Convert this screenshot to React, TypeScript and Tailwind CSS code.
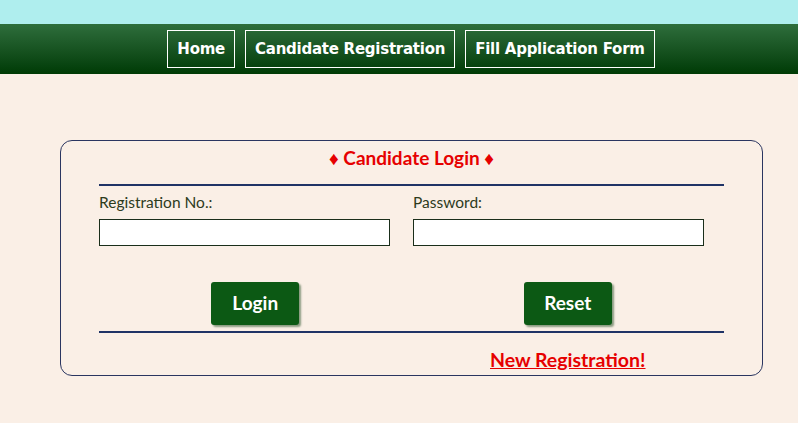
export default function App() {
  const navItems = ["Home", "Candidate Registration", "Fill Application Form"];

  return (
    <div className="min-h-[423px] bg-[#faefe6]">
      <div className="h-[24px] bg-[#afeeee]" />
      <nav className="flex h-[50px] items-center justify-center gap-[10px] bg-gradient-to-b from-[#2e6e3c] to-[#003b05] pl-[24px]">
        {navItems.map((item) => (
          <a
            key={item}
            href="#"
            className="flex h-[38px] items-center border border-white px-[9px] font-['DejaVu_Sans',sans-serif] text-[15px] font-bold tracking-[-0.25px] text-white"
          >
            {item}
          </a>
        ))}
      </nav>

      <div className="pl-[60px] pt-[66px]">
        <div className="w-[703px] rounded-[12px] border border-[#2a3560] px-[38px] pb-[3px] font-['Lato',sans-serif]">
          <h2 className="pt-[5px] pb-[14px] text-center text-[19px] font-bold leading-[24px] text-[#e60000]">
            ♦ Candidate Login ♦
          </h2>
          <div className="h-[2px] w-[625px] bg-[#1f3366]" />

          <div className="mt-[6px] grid grid-cols-[291px_291px] gap-x-[23px]">
            <div>
              <label className="block text-[15.5px] leading-[20px] text-[#2d3b1c]">Registration No.:</label>
              <input
                type="text"
                className="mt-[7px] block h-[27px] w-[291px] border border-[#1a2e1a] bg-white px-[4px] outline-none"
              />
            </div>
            <div>
              <label className="block text-[15.5px] leading-[20px] text-[#2d3b1c]">Password:</label>
              <input
                type="password"
                className="mt-[7px] block h-[27px] w-[291px] border border-[#1a2e1a] bg-white px-[4px] outline-none"
              />
            </div>
          </div>

          <div className="mt-[36px] grid w-[625px] grid-cols-2">
            <div className="flex justify-center">
              <button className="h-[43px] w-[88px] rounded-[3px] bg-[#0c5914] text-[19px] font-bold text-white shadow-[2px_2px_2px_#8a9a80]">
                Login
              </button>
            </div>
            <div className="flex justify-center">
              <button className="h-[43px] w-[88px] rounded-[3px] bg-[#0c5914] text-[19px] font-bold text-white shadow-[2px_2px_2px_#8a9a80]">
                Reset
              </button>
            </div>
          </div>

          <div className="mt-[6px] h-[2px] w-[625px] bg-[#1f3366]" />

          <div className="grid w-[625px] grid-cols-2 pt-[15px]">
            <div />
            <div className="flex justify-center">
              <a href="#" className="text-[19.5px] font-bold leading-[24px] text-[#e60000] underline">
                New Registration!
              </a>
            </div>
          </div>
        </div>
      </div>
    </div>
  );
}
